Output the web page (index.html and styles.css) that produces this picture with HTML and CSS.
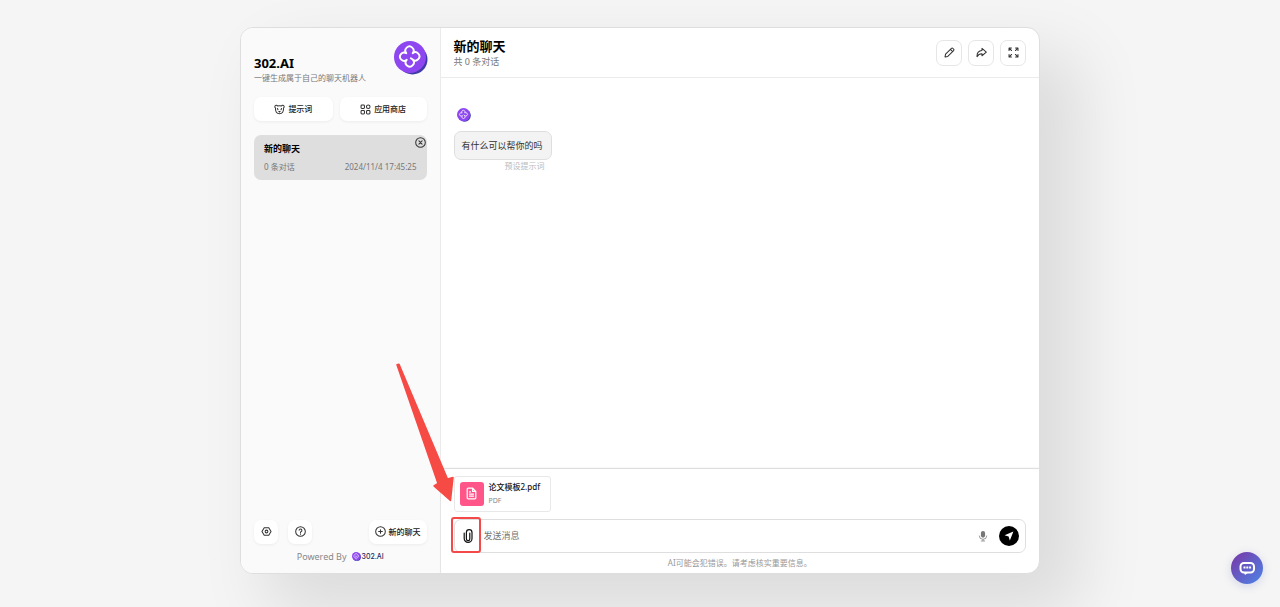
FILE: index.html
```html
<!DOCTYPE html>
<html lang="zh-CN">
<head>
<meta charset="utf-8">
<meta name="viewport" content="width=device-width, initial-scale=1">
<title>302.AI</title>
<link rel="stylesheet" href="styles.css">
</head>
<body>
<svg class="defs" aria-hidden="true">
  <defs>
    <linearGradient id="bubble" x1="0" y1="0" x2="1" y2="1">
      <stop offset="0" stop-color="#7a35a5"/><stop offset="1" stop-color="#4c86e8"/>
    </linearGradient>
    <symbol id="logo" viewBox="0 0 34 34">
      <circle cx="18.500" cy="18.500" r="15" fill="#3f3aa8"/>
      <circle cx="16" cy="16" r="16" fill="#8e47f0"/>
      <path d="M12.800 18.800A4.100 4.100 0 1 1 12.300 12.200A4.100 4.100 0 1 1 18.700 12.200A4.100 4.100 0 1 1 18.700 18.600L16.800 17.200M18.700 18.600A4.100 4.100 0 1 1 12.300 19.200" fill="none" stroke="#fff" stroke-width="1.900" stroke-linecap="round" stroke-linejoin="round"/>
    </symbol>
  </defs>
</svg>
<div class="window">
  <aside class="sidebar">
    <header class="brand">
      <div>
        <h1 class="brand-name">302.AI</h1>
        <p class="brand-sub">一键生成属于自己的聊天机器人</p>
      </div>
      <svg class="brand-logo" aria-hidden="true"><use href="#logo"/></svg>
    </header>
    <div class="shortcuts">
      <button class="soft-button grow" type="button">
        <svg class="icon" viewBox="0 0 16 16" aria-hidden="true"><path d="M5.200 2.900C4.500 1.300 1.200 1.600 1.200 4c0 1 .5 1.600 1.100 2C1.300 10.800 4.300 14.300 8 14.300s6.700-3.500 5.700-8.300c.6-.4 1.100-1 1.100-2 0-2.400-3.300-2.700-4-1.100C9.200 2.400 6.800 2.400 5.200 2.900Z"/><path d="M5 6.500l.8 1.800M11 6.500l-.8 1.800M7 10.800h2l-1 .8z"/></svg>
        <span>提示词</span>
      </button>
      <button class="soft-button grow" type="button">
        <svg class="icon" viewBox="0 0 16 16" aria-hidden="true"><rect x="1.500" y="1.500" width="5" height="5" rx="1.300"/><circle cx="12" cy="4" r="2.600"/><rect x="1.500" y="9.500" width="5" height="5" rx="1.300"/><rect x="9.500" y="9.500" width="5" height="5" rx="1.300"/></svg>
        <span>应用商店</span>
      </button>
    </div>
    <article class="chat-item">
      <h2 class="chat-item-title">新的聊天</h2>
      <div class="chat-item-info"><span>0 条对话</span><time datetime="2024-11-04T17:45:25">2024/11/4 17:45:25</time></div>
      <button class="chat-item-close" type="button" aria-label="删除"><svg class="icon" viewBox="0 0 16 16" aria-hidden="true"><circle cx="8" cy="8" r="7"/><path d="M5.700 5.700l4.600 4.600M10.300 5.700l-4.600 4.600"/></svg></button>
    </article>
    <footer class="sidebar-foot">
      <div class="foot-actions">
        <button class="soft-button square" type="button" aria-label="设置"><svg class="icon" viewBox="0 0 16 16" aria-hidden="true"><path d="M4.700 2.600h6.600L14.600 8l-3.300 5.400H4.700L1.400 8z"/><circle cx="8" cy="8" r="2"/></svg></button>
        <button class="soft-button square" type="button" aria-label="帮助"><svg class="icon" viewBox="0 0 16 16" aria-hidden="true"><circle cx="8" cy="8" r="7"/><path d="M6 6.300a2 2 0 1 1 3 1.800c-.7.400-1 .7-1 1.500M8 11.400v.5"/></svg></button>
        <button class="soft-button push" type="button">
          <svg class="icon" viewBox="0 0 16 16" aria-hidden="true"><circle cx="8" cy="8" r="7"/><path d="M5.300 8h5.400M8 5.300v5.400"/></svg>
          <span>新的聊天</span>
        </button>
      </div>
      <p class="powered">Powered By <a class="powered-link" href="#"><svg class="powered-logo" aria-hidden="true"><use href="#logo"/></svg>302.AI</a></p>
    </footer>
  </aside>
  <main class="chat">
    <header class="chat-head">
      <div>
        <h2 class="chat-title">新的聊天</h2>
        <p class="chat-count">共 0 条对话</p>
      </div>
      <div class="chat-tools">
        <button class="tool" type="button" aria-label="编辑"><svg class="icon" viewBox="0 0 16 16" aria-hidden="true"><path d="M1.500 14.500l.8-4L10.800 2a1.500 1.500 0 0 1 2.200 0l1 1a1.500 1.500 0 0 1 0 2.200L5.500 13.700zM9.300 3.500l3.200 3.200"/></svg></button>
        <button class="tool" type="button" aria-label="分享"><svg class="icon" viewBox="0 0 16 16" aria-hidden="true"><path d="M8.700 2L15 7.500 8.700 12.700V9.700C5.500 9.500 3.200 11 1.500 14 1.300 9 3.500 5.300 8.700 5z"/></svg></button>
        <button class="tool" type="button" aria-label="全屏"><svg class="icon" viewBox="0 0 16 16" aria-hidden="true"><path d="M1.500 5V1.500H5M1.800 1.800l3.400 3.400M11 1.500h3.500V5M14.200 1.800l-3.400 3.400M1.500 11v3.500H5M1.800 14.200l3.400-3.400M14.500 11v3.500H11M14.200 14.200l-3.400-3.400"/></svg></button>
      </div>
    </header>
    <section class="messages">
      <div class="message">
        <svg class="avatar" aria-hidden="true"><use href="#logo"/></svg>
        <p class="message-text">有什么可以帮你的吗</p>
        <p class="message-note">预设提示词</p>
      </div>
    </section>
    <form class="composer">
      <div class="file">
        <span class="file-icon"><svg class="icon" viewBox="0 0 16 16" aria-hidden="true"><path d="M9.500 1.500H4A1.300 1.300 0 0 0 2.700 2.800v10.400A1.300 1.300 0 0 0 4 14.500h8a1.300 1.300 0 0 0 1.300-1.300V5.300zM9.300 1.700v3.800h3.800M5.500 6h1.300M5.500 8.700h5M5.500 11.300h5"/></svg></span>
        <div>
          <p class="file-name">论文模板2.pdf</p>
          <p class="file-type">PDF</p>
        </div>
      </div>
      <div class="entry">
        <button class="attach" type="button" aria-label="上传附件"><svg class="attach-icon" viewBox="0 0 12 16" aria-hidden="true"><path d="M7.800 5v6a1.700 1.700 0 0 1-3.400 0V4.500a2.800 2.800 0 0 1 5.600 0V10.500a3.900 3.900 0 0 1-7.800 0V5"/></svg></button>
        <input class="entry-input" type="text" placeholder="发送消息" aria-label="发送消息">
        <button class="mic" type="button" aria-label="语音输入"><svg class="mic-icon" viewBox="0 0 12 14" aria-hidden="true"><rect x="3.500" y="1" width="5" height="8" rx="2.500" fill="#777"/><path d="M1.500 6.500a4.500 4.500 0 0 0 9 0M6 11v2M3.500 13h5" fill="none" stroke="#888"/></svg></button>
        <button class="send" type="submit" aria-label="发送"><svg class="send-icon" viewBox="0 0 12 12" aria-hidden="true"><path d="M11.300.7L7 11.300 5.500 6.500.7 5z" fill="#fff"/></svg></button>
        <span class="highlight"></span>
        <svg class="pointer" viewBox="0 0 22 140" aria-hidden="true"><path d="M-36 .7L-34 .2 14.500 115 20 113.500 17.500 136.500 1 122 5 119.500z"/></svg>
      </div>
      <p class="disclaimer">AI可能会犯错误。请考虑核实重要信息。</p>
    </form>
  </main>
</div>
<button class="support" type="button" aria-label="在线客服"><svg class="support-icon" viewBox="0 0 32 32" aria-hidden="true"><circle cx="16" cy="16" r="16" fill="url(#bubble)"/><rect x="9.500" y="11" width="13.500" height="9.500" rx="3.500" fill="none" stroke="#fff" stroke-width="2"/><path d="M13 20.500h4.500L14 23z" fill="#fff"/><path d="M12.500 14.500h2v2h-2zM15.300 14.500h2v2h-2zM18.100 14.500h2v2h-2z" fill="#fff"/></svg></button>
</body>
</html>
```

FILE: styles.css
```css
* { box-sizing: border-box; }
body {
  margin: 0;
  min-height: 100vh;
  padding-bottom: 6px;
  display: flex;
  align-items: center;
  justify-content: center;
  overflow: hidden;
  background: #f5f5f5;
  color: #303030;
  font: 8px/12px "Noto Sans", "Noto Sans CJK SC", sans-serif;
}
h1, h2, p { margin: 0; }
button, input { font: inherit; color: inherit; }
button { padding: 0; border: 0; background: none; cursor: pointer; }
.defs { position: absolute; width: 0; height: 0; }
.icon {
  width: 11px;
  height: 11px;
  flex: none;
  fill: none;
  stroke: #333;
  stroke-width: 1.5;
  stroke-linecap: round;
  stroke-linejoin: round;
}

.window {
  display: flex;
  width: 90vw;
  max-width: 800px;
  height: 90vh;
  overflow: hidden;
  border: 1px solid #dedede;
  border-radius: 13px;
  background: #fff;
  box-shadow: 33px 33px 67px 7px rgba(0, 0, 0, .1);
}

.sidebar {
  display: flex;
  flex-direction: column;
  flex: 0 0 25%;
  padding: 13px 13px 9px;
  border-right: 1px solid #ebebeb;
  background: #fafafa;
}
.brand { display: flex; justify-content: space-between; height: 43px; }
.brand-name { padding-top: 14px; color: #000; font-size: 13px; line-height: 17px; }
.brand-sub { color: #777; white-space: nowrap; }
.brand-logo { width: 34px; height: 34px; flex: none; margin: 0 -1px 0 -8px; }
.shortcuts { display: flex; gap: 7px; margin: 13px 0 14px; }
.soft-button {
  display: flex;
  align-items: center;
  justify-content: center;
  gap: 3px;
  height: 24px;
  padding: 0 6px;
  border-radius: 7px;
  background: #fff;
  box-shadow: 0 1px 3px rgba(0, 0, 0, .06);
  color: #222;
  font-weight: 500;
}
.grow { flex: 1 1 auto; }
.square { width: 24px; }
.push { margin-left: auto; }
.chat-item {
  position: relative;
  padding: 7px 10px;
  border-radius: 7px;
  background: #dedede;
}
.chat-item-title { color: #000; font-size: 9px; line-height: 14px; }
.chat-item-info { display: flex; justify-content: space-between; padding-top: 5px; color: #777; }
.chat-item-close { position: absolute; top: 2px; right: 1px; display: flex; }
.sidebar-foot { margin-top: auto; }
.foot-actions { display: flex; gap: 10px; }
.powered {
  display: flex;
  justify-content: center;
  gap: 5px;
  padding-top: 6px;
  color: #888;
  font-size: 9px;
  line-height: 14px;
}
.powered-link {
  display: flex;
  align-items: center;
  gap: 1px;
  color: #1f2a5c;
  font: 500 7px/14px Inter, sans-serif;
  text-decoration: none;
}
.powered-logo { width: 9px; height: 9px; }

.chat { display: flex; flex: 1; flex-direction: column; min-width: 0; }
.chat-head {
  display: flex;
  align-items: center;
  justify-content: space-between;
  height: 50px;
  padding: 0 13px;
  border-bottom: 1px solid #ebebeb;
}
.chat-title { padding-top: 2px; color: #000; font-size: 13px; line-height: 17px; }
.chat-count { color: #777; font-size: 9px; line-height: 14px; }
.chat-tools { display: flex; gap: 6px; }
.tool {
  display: grid;
  place-items: center;
  width: 26px;
  height: 26px;
  border: 1px solid #e6e6e6;
  border-radius: 7px;
}
.messages { flex: 1; padding: 30px 13px; }
.message { display: flex; flex-direction: column; width: fit-content; }
.avatar { width: 14px; height: 14px; margin: 0 3px 9px; }
.message-text {
  padding: 7px 8px 7px 7px;
  border: 1px solid #dedede;
  border-radius: 7px;
  background: #f3f3f3;
  font-size: 9px;
  line-height: 13px;
}
.message-note { padding-right: 7px; color: #bbb; text-align: right; }

.composer {
  display: flex;
  flex-direction: column;
  gap: 7px;
  padding: 7px 13px 5px;
  border-top: 1px solid #dedede;
  box-shadow: 0 0 2px rgba(0, 0, 0, .08);
}
.file {
  display: flex;
  align-items: center;
  align-self: flex-start;
  gap: 5px;
  height: 36px;
  padding: 0 10px 0 5px;
  border: 1px solid #e8e8e8;
  border-radius: 3px;
}
.file-icon {
  display: grid;
  place-items: center;
  width: 24px;
  height: 24px;
  border-radius: 3px;
  background: #ff5588;
}
.file-icon .icon { width: 13px; height: 13px; stroke: #fff; }
.file-name { color: #111; font-weight: 500; line-height: 14px; }
.file-type { color: #888; font-size: 7px; line-height: 14px; }
.entry {
  position: relative;
  display: flex;
  align-items: center;
  height: 34px;
  padding: 0 6px;
  border: 1px solid #dedede;
  border-radius: 7px;
}
.attach { display: grid; place-items: center; width: 14px; height: 26px; }
.attach-icon { width: 12px; height: 16px; fill: none; stroke: #111; stroke-width: 1.2; stroke-linecap: round; }
.entry-input {
  flex: 1;
  min-width: 0;
  margin: 0;
  padding: 0 9px;
  border: 0;
  outline: 0;
  background: none;
  font-size: 9px;
  line-height: 14px;
}
.entry-input::placeholder { color: #757575; }
.mic { display: flex; margin-right: 11px; }
.mic-icon { width: 10px; height: 12px; }
.send {
  display: grid;
  place-items: center;
  width: 20px;
  height: 20px;
  border-radius: 50%;
  background: #000;
}
.send-icon { width: 10px; height: 10px; }
.highlight {
  position: absolute;
  top: -3px;
  left: -4px;
  width: 30px;
  height: 36px;
  border: 2px solid #f44949;
  border-radius: 3px;
  pointer-events: none;
}
.pointer {
  position: absolute;
  top: -156px;
  left: -22px;
  width: 22px;
  height: 140px;
  overflow: visible;
  fill: #f64a45;
  stroke: #f64a45;
  stroke-width: 1.5;
  stroke-linejoin: round;
  pointer-events: none;
}
.disclaimer { margin-top: -2px; color: #999; line-height: 10px; text-align: center; }

.support {
  position: fixed;
  right: 17px;
  bottom: 23px;
  width: 32px;
  height: 32px;
  border-radius: 50%;
  box-shadow: 0 2px 10px rgba(70, 80, 180, .2);
}
.support-icon { display: block; width: 32px; height: 32px; }
```
